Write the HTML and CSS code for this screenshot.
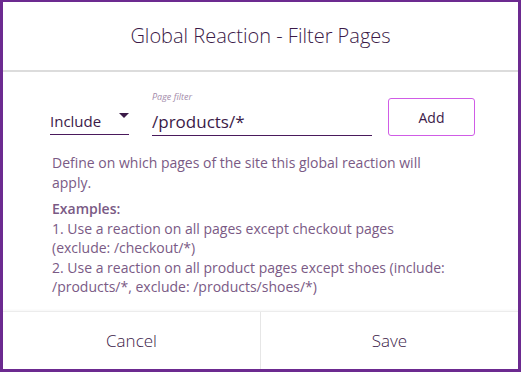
FILE: index.html
```html
<!DOCTYPE html>
<html lang="en">
<head>
  <meta charset="UTF-8" />
  <title>Global Reaction - Filter Pages</title>
  <link rel="stylesheet" href="styles.css">
</head>
<body>

<div class="modal">
  <div class="modal-header">Global Reaction - Filter Pages</div>

  <div class="modal-body">
    <div class="filter-row">
      <div class="select">
        <span>Include</span>
        <span class="caret"></span>
      </div>
      <div class="field">
        <label class="field-label">Page filter</label>
        <div class="field-input">/products/*</div>
      </div>
      <button class="add-btn">Add</button>
    </div>

    <div class="help">
      <p>Define on which pages of the site this global reaction will apply.</p>
      <p class="help-title">Examples:</p>
      <p>1. Use a reaction on all pages except checkout pages (exclude: /checkout/*)</p>
      <p>2. Use a reaction on all product pages except shoes (include: /products/*, exclude: /products/shoes/*)</p>
    </div>
  </div>

  <div class="modal-footer">
    <button class="footer-btn">Cancel</button>
    <button class="footer-btn">Save</button>
  </div>
</div>

</body>
</html>
```

FILE: styles.css
```css
* {
  margin: 0; padding: 0; box-sizing: border-box;
}
body {
  font-family: 'Open Sans', sans-serif;
  background: #6c2a90;
  width: 521px;
  height: 372px;
  padding: 2px 3px 3px 3px;
}
.modal {
  background: white;
  height: 100%;
  display: flex;
  flex-direction: column;
}
.modal-header {
  height: 70px;
  border-bottom: 2px solid #dcdcdc;
  display: flex;
  align-items: center;
  justify-content: center;
  font-size: 20px;
  font-weight: 300;
  color: #3b1a48;
  padding-bottom: 2px;
}
.modal-body {
  flex: 1;
  padding: 2px 40px 0 47px;
}
.filter-row {
  display: flex;
  align-items: flex-end;
  height: 62px;
}
.select {
  width: 79px;
  height: 27px;
  border-bottom: 1px solid #4a1a5c;
  display: flex;
  justify-content: space-between;
  font-size: 15px;
  color: #3b1a48;
  padding-top: 3px;
  margin-bottom: 1px;
}
.caret {
  width: 0;
  height: 0;
  border-left: 5px solid transparent;
  border-right: 5px solid transparent;
  border-top: 5px solid #3b1a48;
  transform: translateY(2px);
}
.field {
  margin-left: 23px;
  width: 220px;
}
.field-label {
  display: block;
  font-size: 9px;
  font-style: italic;
  color: #a48cab;
  margin-bottom: 8px;
}
.field-input {
  height: 25px;
  border-bottom: 1px solid #4a1a5c;
  font-size: 17px;
  color: #3b1a48;
  line-height: 22px;
}
.add-btn {
  margin-left: 16px;
  width: 87px;
  height: 38px;
  border: 1px solid #d05ce6;
  border-radius: 3px;
  background: white;
  font-family: 'Open Sans', sans-serif;
  font-size: 14px;
  color: #3b1a48;
}
.help {
  margin-top: 17px;
  padding-left: 2px;
  width: 398px;
  font-size: 14px;
  line-height: 19.5px;
  color: #7a5a85;
}
.help p:first-child {
  margin-bottom: 7px;
}
.help-title {
  font-weight: 600;
}
.modal-footer {
  height: 58px;
  border-top: 1px solid #ececec;
  box-shadow: 0 -1px 2px rgba(0, 0, 0, 0.04);
  display: flex;
}
.footer-btn {
  flex: 1;
  background: white;
  border: none;
  font-family: 'Open Sans', sans-serif;
  font-size: 17px;
  font-weight: 300;
  color: #3b1a48;
}
.footer-btn + .footer-btn {
  border-left: 1px solid #e6e6e6;
}
```
